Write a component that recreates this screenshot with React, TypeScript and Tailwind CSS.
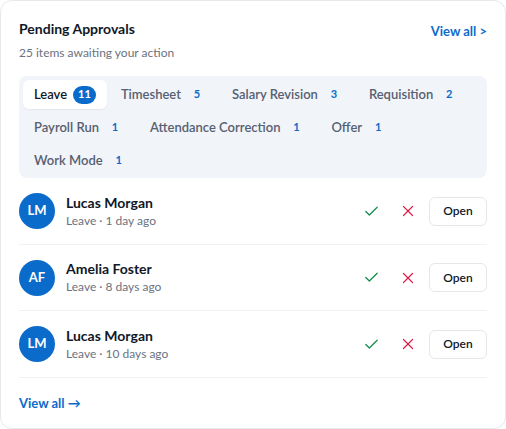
import { Check, X } from "lucide-react";

const tabs = [
  [
    { label: "Leave", count: 11, active: true },
    { label: "Timesheet", count: 5 },
    { label: "Salary Revision", count: 3 },
    { label: "Requisition", count: 2 },
  ],
  [
    { label: "Payroll Run", count: 1 },
    { label: "Attendance Correction", count: 1 },
    { label: "Offer", count: 1 },
  ],
  [{ label: "Work Mode", count: 1 }],
];

const items = [
  { initials: "LM", name: "Lucas Morgan", meta: "Leave · 1 day ago", h: "h-[67px]" },
  { initials: "AF", name: "Amelia Foster", meta: "Leave · 8 days ago", h: "h-[66px]" },
  { initials: "LM", name: "Lucas Morgan", meta: "Leave · 10 days ago", h: "h-[67px]" },
];

function Tab({ label, count, active }: { label: string; count: number; active?: boolean }) {
  return (
    <button
      className={
        active
          ? "h-[29px] flex items-center gap-[6px] px-[11px] rounded-md bg-white shadow-[0_1px_2px_rgba(15,23,42,0.06)] text-[13px] font-semibold whitespace-nowrap text-[#111827]"
          : "h-[29px] flex items-center gap-[6px] px-[11px] rounded-md text-[13px] font-semibold whitespace-nowrap text-[#576071]"
      }
    >
      <span>{label}</span>
      <span
        className={
          active
            ? "min-w-[20px] h-[18px] px-[5px] rounded-full bg-[#0b6bcb] text-white text-[11px] font-bold flex items-center justify-center"
            : "min-w-[20px] h-[18px] px-[5px] rounded-full text-[#0b6bcb] text-[11px] font-bold flex items-center justify-center"
        }
      >
        {count}
      </span>
    </button>
  );
}

export default function App() {
  return (
    <div className="w-[506px] h-[429px] bg-white border border-[#e6e8ec] rounded-xl px-[18px] pt-[18px] font-['Lato',sans-serif]">
      <div className="flex items-start justify-between">
        <div>
          <h2 className="text-[14px] leading-[20px] font-bold text-[#111827]">Pending Approvals</h2>
          <p className="mt-[6px] text-[12px] leading-[16px] text-[#6b7280]">25 items awaiting your action</p>
        </div>
        <a href="#" className="mt-[3px] text-[13px] leading-[18px] font-bold text-[#0b6bcb]">
          View all &gt;
        </a>
      </div>

      <div className="mt-[15px] bg-[#f1f4f9] rounded-lg pt-[4px] pb-[3px] px-[4px] flex flex-col gap-[4px]">
        {tabs.map((row, i) => (
          <div key={i} className="flex items-center gap-[3px]">
            {row.map((t) => (
              <Tab key={t.label} {...t} />
            ))}
          </div>
        ))}
      </div>

      <div>
        {items.map((it, i) => (
          <div key={i} className={`${it.h} flex items-center border-b border-[#f1f2f5]`}>
            <div className="w-9 h-9 rounded-full bg-[#0b6bcb] text-white text-[13px] font-bold flex items-center justify-center">
              {it.initials}
            </div>
            <div className="ml-[11px] flex-1">
              <div className="text-[14px] leading-[18px] font-bold text-[#111827]">{it.name}</div>
              <div className="mt-[1px] text-[12px] leading-[16px] text-[#6b7280]">{it.meta}</div>
            </div>
            <div className="flex items-center gap-[9px]">
              <button className="w-[28px] h-[28px] flex items-center justify-center text-[#138a4b]">
                <Check size={17} strokeWidth={1.75} />
              </button>
              <button className="w-[28px] h-[28px] flex items-center justify-center text-[#e11d48]">
                <X size={18} strokeWidth={1.6} />
              </button>
            </div>
            <button className="ml-[7px] w-[58px] h-[29px] rounded-md border border-[#e5e7eb] text-[12px] font-semibold text-[#111827]">
              Open
            </button>
          </div>
        ))}
      </div>

      <a href="#" className="block mt-[16px] text-[13px] leading-[18px] font-bold text-[#0b6bcb]">
        View all →
      </a>
    </div>
  );
}
